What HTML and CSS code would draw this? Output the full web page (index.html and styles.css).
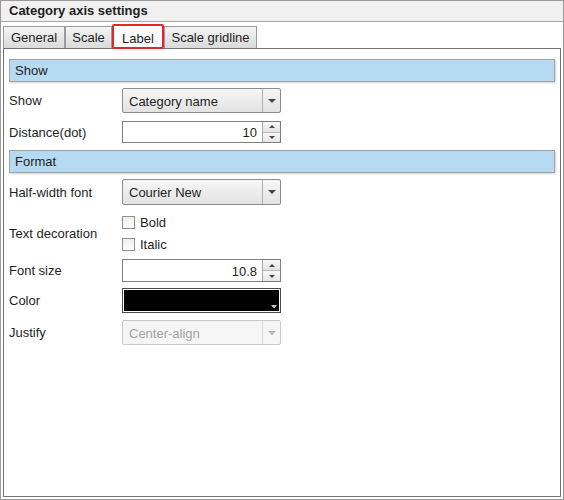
FILE: index.html
```html
<!DOCTYPE html>
<html lang="en">
<head>
    <meta charset="UTF-8">
    <meta name="viewport" content="width=device-width, initial-scale=1.0">
    <title>Category axis settings</title>
    <link rel="stylesheet" href="styles.css">
</head>
<body>
    <div class="window">
        <div class="title-bar">Category axis settings</div>

        <div class="tabs">
            <div class="tab tab-general">General</div>
            <div class="tab tab-scale">Scale</div>
            <div class="tab tab-label active">Label</div>
            <div class="tab tab-grid">Scale gridline</div>
        </div>

        <div class="panel">
            <div class="section">Show</div>

            <div class="row row-show">
                <div class="label">Show</div>
                <div class="combo">
                    <span class="combo-text">Category name</span>
                    <span class="combo-btn"><i class="arrow-down"></i></span>
                </div>
            </div>

            <div class="row row-distance">
                <div class="label">Distance(dot)</div>
                <div class="spin">
                    <span class="spin-value">10</span>
                    <span class="spin-btns">
                        <span class="spin-up"><i class="arrow-up small"></i></span>
                        <span class="spin-down"><i class="arrow-down small"></i></span>
                    </span>
                </div>
            </div>

            <div class="section section-format">Format</div>

            <div class="row row-font">
                <div class="label">Half-width font</div>
                <div class="combo">
                    <span class="combo-text">Courier New</span>
                    <span class="combo-btn"><i class="arrow-down"></i></span>
                </div>
            </div>

            <div class="row row-decoration">
                <div class="label">Text decoration</div>
                <div class="checks">
                    <label class="check-line"><span class="check"></span>Bold</label>
                    <label class="check-line"><span class="check"></span>Italic</label>
                </div>
            </div>

            <div class="row row-size">
                <div class="label">Font size</div>
                <div class="spin">
                    <span class="spin-value">10.8</span>
                    <span class="spin-btns">
                        <span class="spin-up"><i class="arrow-up small"></i></span>
                        <span class="spin-down"><i class="arrow-down small"></i></span>
                    </span>
                </div>
            </div>

            <div class="row row-color">
                <div class="label">Color</div>
                <div class="color-box">
                    <div class="swatch">
                        <svg class="swatch-arrow" width="6" height="4" viewBox="0 0 6 4"><path d="M0 0h6L3 3.5z" fill="#c8c8c8"/></svg>
                    </div>
                </div>
            </div>

            <div class="row row-justify">
                <div class="label">Justify</div>
                <div class="combo disabled">
                    <span class="combo-text">Center-align</span>
                    <span class="combo-btn"><i class="arrow-down"></i></span>
                </div>
            </div>
        </div>
    </div>
</body>
</html>
```

FILE: styles.css
```css
* { box-sizing: border-box; }
body { margin: 0; font-family: "Liberation Sans", Arial, sans-serif; font-size: 13px; color: #1e1e1e; background: #fff; }

.window { width: 564px; height: 500px; border: 1px solid #9a9a9a; display: flex; flex-direction: column; }
.title-bar { height: 21px; line-height: 20px; padding-left: 8px; font-weight: bold; background: #f0f0f0; border-bottom: 1px solid #a8a8a8; }

/* tab strip */
.tabs { display: flex; align-items: flex-end; height: 26px; padding-left: 2px; }
.tab { height: 22px; line-height: 21px; text-align: center; border: 1px solid #9a9a9a; border-bottom: none; background: linear-gradient(#f4f4f4, #dadada); }
.tab-general { width: 62px; }
.tab-scale { width: 47px; margin-left: 0; }
.tab-label { width: 52px; }
.tab-grid { width: 93px; }
.tab.active { height: 25px; line-height: 25px; margin-bottom: -1px; position: relative; z-index: 1; background: #fbfbfb; border: 2px solid #e3262b; border-radius: 2px; }

/* content panel */
.panel { flex: 1; margin: 0 2px 2px 2px; border: 1px solid #737373; padding: 10px 5px 0 5px; }
.section { height: 23px; line-height: 21px; padding-left: 5px; background: #b5daf1; border: 1px solid #a3a3a3; box-shadow: 1px 1px 2px rgba(0, 0, 0, 0.18); }
.section-format { margin-top: 7px; }

.row { display: flex; align-items: center; }
.label { width: 113px; }
.row-show { margin-top: 6px; height: 25px; }
.row-distance { margin-top: 8px; height: 22px; }
.row-font { margin-top: 6px; height: 26px; }
.row-decoration { margin-top: 6px; height: 44px; }
.row-size { margin-top: 4px; height: 23px; }
.row-color { margin-top: 6px; height: 25px; }
.row-justify { margin-top: 7px; height: 25px; }

/* drop-down */
.combo { width: 159px; height: 100%; display: flex; border: 1px solid #8c8c8c; border-radius: 2px; background: linear-gradient(#f7f7f7, #e2e2e2); }
.combo-text { flex: 1; padding-left: 6px; display: flex; align-items: center; padding-top: 1px; }
.combo-btn { width: 18px; border-left: 1px solid #b0b0b0; display: flex; align-items: center; justify-content: center; }
.combo.disabled { border-color: #c9c9c9; background: #f5f5f5; color: #a2a2a2; }
.combo.disabled .combo-btn { border-left-color: #dadada; }
.combo.disabled .arrow-down { border-top-color: #b4b4b4; }

.arrow-down { width: 0; height: 0; border-left: 4px solid transparent; border-right: 4px solid transparent; border-top: 4px solid #444; }
.arrow-up { width: 0; height: 0; border-left: 4px solid transparent; border-right: 4px solid transparent; border-bottom: 4px solid #444; }
.arrow-down.small { border-left-width: 3px; border-right-width: 3px; border-top-width: 3px; }
.arrow-up.small { border-left-width: 3px; border-right-width: 3px; border-bottom-width: 3px; }

/* numeric field */
.spin { width: 159px; height: 100%; display: flex; border: 1px solid #7e7e7e; background: #fff; }
.spin-value { flex: 1; text-align: right; padding-right: 5px; display: flex; align-items: center; justify-content: flex-end; padding-top: 1px; }
.spin-btns { width: 18px; border-left: 1px solid #a8a8a8; display: flex; flex-direction: column; }
.spin-up, .spin-down { flex: 1; display: flex; align-items: center; justify-content: center; background: linear-gradient(#f8f8f8, #e4e4e4); }
.spin-up { border-bottom: 1px solid #b8b8b8; }

/* check boxes */
.checks { display: flex; flex-direction: column; }
.check-line { height: 22px; display: flex; align-items: center; }
.check { width: 13px; height: 13px; margin-right: 5px; border: 1px solid #8e8e8e; background: linear-gradient(#eeeeee, #ffffff); }

/* colour picker */
.color-box { width: 159px; height: 100%; border: 1px solid #4a4a4a; padding: 1px; background: #fff; }
.swatch { height: 100%; background: #000; position: relative; }
.swatch-arrow { position: absolute; right: 2px; bottom: 2px; }
```
